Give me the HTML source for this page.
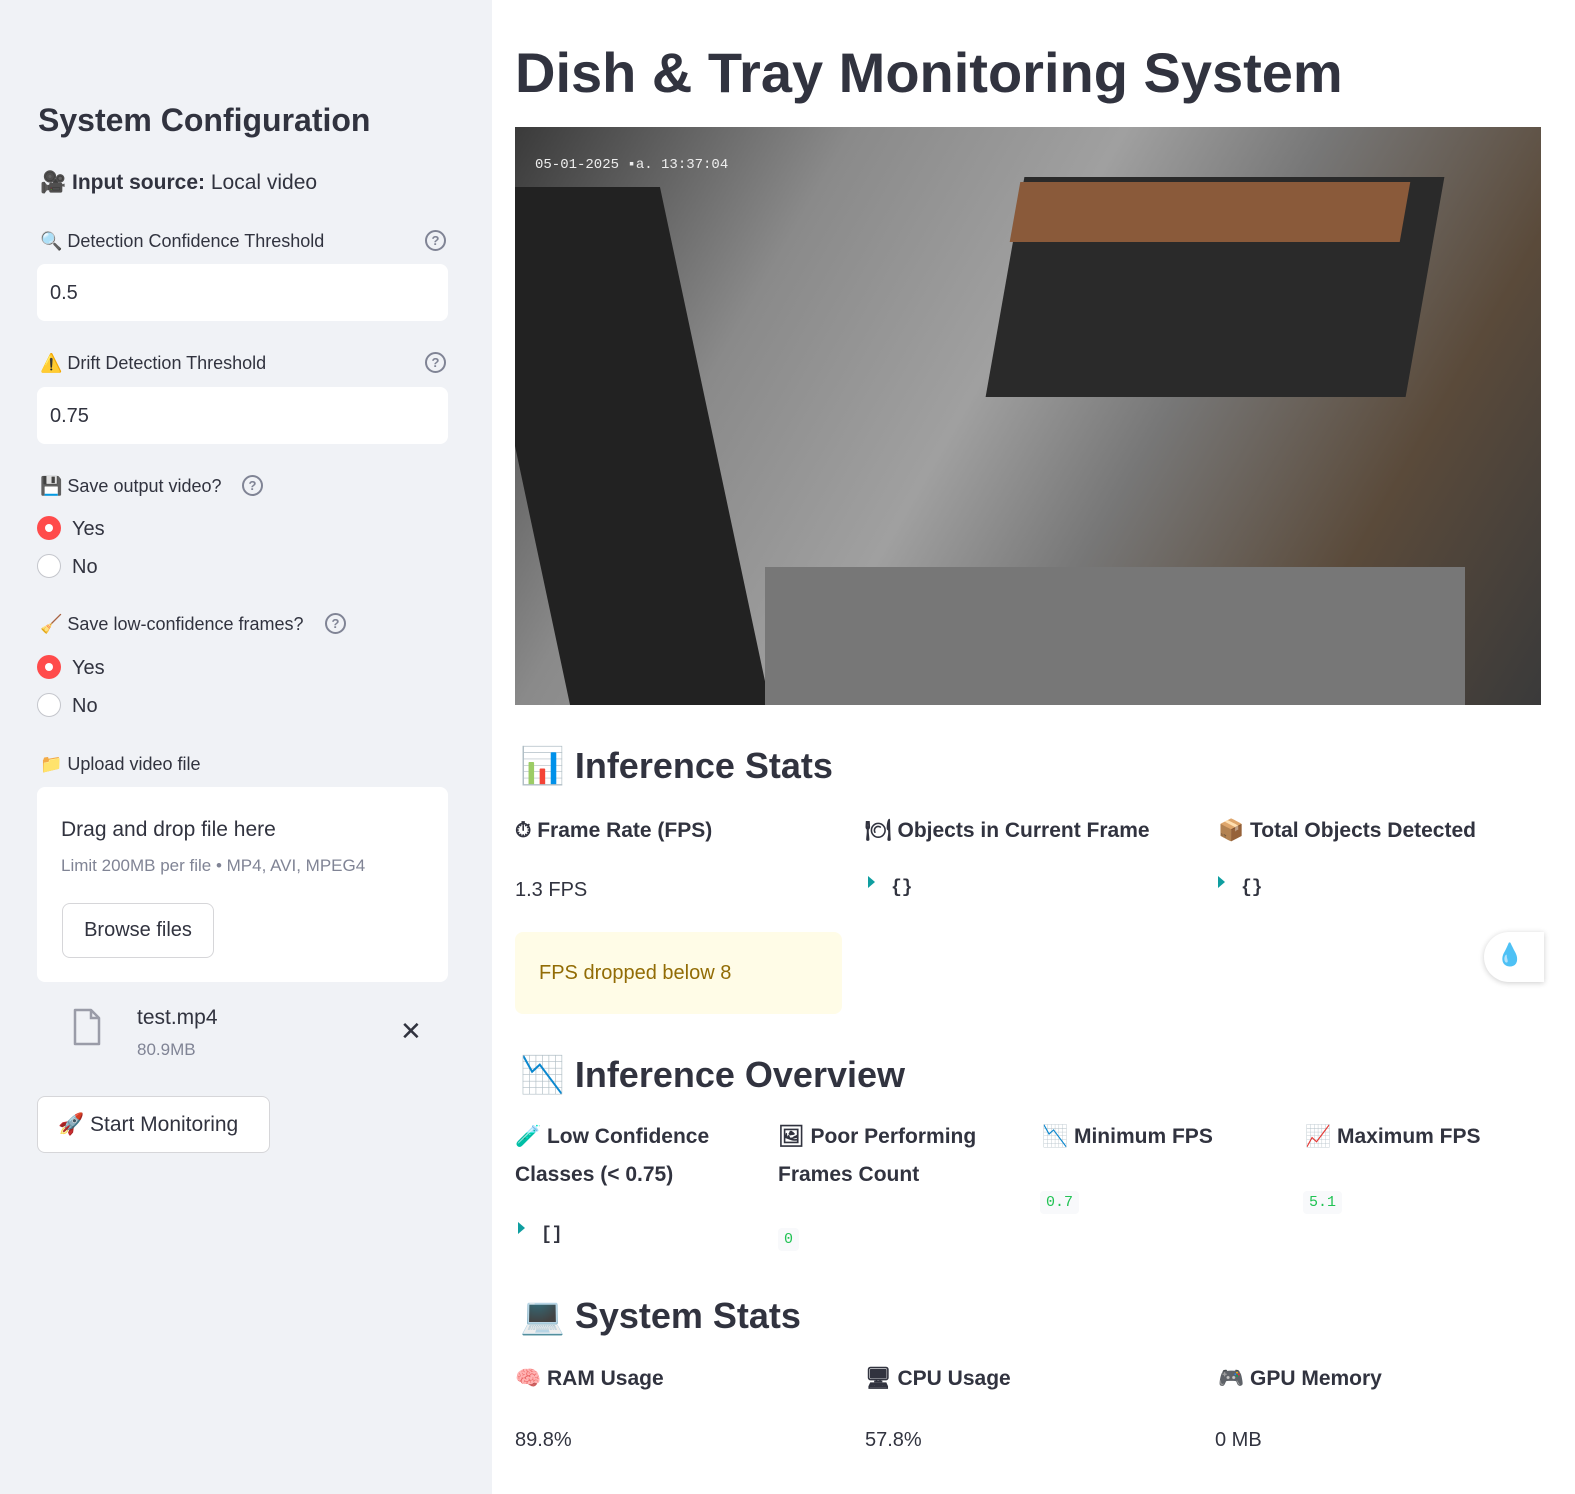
<!DOCTYPE html>
<html><head><meta charset="utf-8"><style>
*{box-sizing:border-box;margin:0;padding:0}
body{width:1575px;height:1494px;position:relative;background:#fff;font-family:"Liberation Sans","Noto Sans CJK JP",sans-serif;color:#31333f;overflow:hidden}
.a{position:absolute;white-space:nowrap}
#sb{position:absolute;left:0;top:0;width:492px;height:1494px;background:#f0f2f6}
.lbl{font-size:18px;color:#31333f}
.inp{position:absolute;left:37px;width:411px;height:57px;background:#fff;border-radius:8px;font-size:20px;padding:18px 13px}
.q{position:absolute;width:21px;height:21px;border:2px solid #808495;border-radius:50%;font-size:13px;font-weight:bold;color:#808495;text-align:center;line-height:17px}
.rad{position:absolute;width:24px;height:24px;border-radius:50%}
.on{background:#ff4b4b}.on::after{content:"";position:absolute;left:8px;top:8px;width:8px;height:8px;border-radius:50%;background:#fff}
.off{border:1.5px solid #c4c6cc;background:#fff}
.rt{font-size:20px}
.h2{font-size:36px;font-weight:bold}
.mh{font-size:21px;font-weight:bold;line-height:38px}
.mv{font-size:20px}
.code{font-family:"Liberation Mono",monospace;font-size:15px;color:#21c354;background:#f8f9fb;padding:3px 6px;border-radius:4px}
.tri{width:0;height:0;border-left:7px solid #0f9ea0;border-top:6px solid transparent;border-bottom:6px solid transparent}
.br{font-family:"Liberation Mono",monospace;font-size:18px;font-weight:bold}
</style></head><body>
<div id="sb"></div>
<div class="a" style="left:38px;top:102px;font-size:32px;font-weight:bold">System Configuration</div>
<div class="a" style="left:40px;top:171px;font-size:21px">🎥 <b>Input source:</b> Local video</div>
<div class="a lbl" style="left:40px;top:231px">🔍 Detection Confidence Threshold</div>
<div class="q" style="left:425px;top:230px">?</div>
<div class="inp" style="top:264px">0.5</div>
<div class="a lbl" style="left:40px;top:353px">⚠️ Drift Detection Threshold</div>
<div class="q" style="left:425px;top:352px">?</div>
<div class="inp" style="top:387px">0.75</div>
<div class="a lbl" style="left:40px;top:476px">💾 Save output video?</div>
<div class="q" style="left:242px;top:475px">?</div>
<div class="rad on" style="left:37px;top:516px"></div><div class="a rt" style="left:72px;top:518px">Yes</div>
<div class="rad off" style="left:37px;top:554px"></div><div class="a rt" style="left:72px;top:556px">No</div>
<div class="a lbl" style="left:40px;top:614px">🧹 Save low-confidence frames?</div>
<div class="q" style="left:325px;top:613px">?</div>
<div class="rad on" style="left:37px;top:655px"></div><div class="a rt" style="left:72px;top:657px">Yes</div>
<div class="rad off" style="left:37px;top:693px"></div><div class="a rt" style="left:72px;top:695px">No</div>
<div class="a lbl" style="left:40px;top:754px">📁 Upload video file</div>
<div class="a" style="left:37px;top:787px;width:411px;height:195px;background:#fff;border-radius:8px"></div>
<div class="a" style="left:61px;top:818px;font-size:21px">Drag and drop file here</div>
<div class="a" style="left:61px;top:856px;font-size:17px;color:#808495">Limit 200MB per file • MP4, AVI, MPEG4</div>
<div class="a" style="left:62px;top:903px;width:152px;height:55px;border:1px solid #d6d6d9;border-radius:8px;background:#fff;font-size:20px;text-align:center;line-height:53px">Browse files</div>
<svg class="a" style="left:72px;top:1008px" width="30" height="38" viewBox="0 0 30 38"><path d="M3 2h16l8 8v26H3z" fill="none" stroke="#9a9ca8" stroke-width="2.5" stroke-linejoin="round"/><path d="M19 2v8h8" fill="none" stroke="#9a9ca8" stroke-width="2.5"/></svg>
<div class="a" style="left:137px;top:1006px;font-size:21px">test.mp4</div>
<div class="a" style="left:137px;top:1040px;font-size:17px;color:#808495">80.9MB</div>
<div class="a" style="left:400px;top:1016px;font-size:26px;color:#31333f">✕</div>
<div class="a" style="left:37px;top:1096px;width:233px;height:57px;border:1px solid #d6d6d9;border-radius:8px;background:#fff;font-size:21px;padding:16px 20px">🚀 Start Monitoring</div>

<div class="a" style="left:515px;top:40px;font-size:56px;font-weight:bold">Dish &amp; Tray Monitoring System</div>
<div class="a" style="left:515px;top:127px;width:1026px;height:578px;background:linear-gradient(120deg,#3a3a3a 0%,#8a8a8a 25%,#a0a0a0 45%,#777 60%,#5a4a3a 80%,#3a3a3a 100%);overflow:hidden">
<div class="a" style="left:490px;top:50px;width:420px;height:220px;background:#2a2a2a;transform:skewX(-10deg)"></div>
<div class="a" style="left:500px;top:55px;width:390px;height:60px;background:#8a5a3a;transform:skewX(-10deg)"></div>
<div class="a" style="left:0;top:60px;width:200px;height:518px;background:#222;transform:skewX(12deg)"></div>
<div class="a" style="left:250px;top:440px;width:700px;height:138px;background:#777"></div>
<div class="a" style="left:20px;top:30px;font-family:'Liberation Mono',monospace;font-size:14px;color:#eee">05-01-2025 ▪a. 13:37:04</div>
</div>
<div class="a h2" style="left:520px;top:745px">📊 Inference Stats</div>
<div class="a mh" style="left:515px;top:812px">⏱ Frame Rate (FPS)</div>
<div class="a mh" style="left:865px;top:812px">🍽 Objects in Current Frame</div>
<div class="a mh" style="left:1218px;top:812px">📦 Total Objects Detected</div>
<div class="a mv" style="left:515px;top:879px">1.3 FPS</div>
<div class="a tri" style="left:868px;top:876px"></div><div class="a br" style="left:891px;top:878px">{}</div>
<div class="a tri" style="left:1218px;top:876px"></div><div class="a br" style="left:1241px;top:878px">{}</div>
<div class="a" style="left:515px;top:932px;width:327px;height:82px;background:#fffce7;border-radius:8px;color:#926c05;font-size:20px;padding:30px 24px">FPS dropped below 8</div>
<div class="a" style="left:1484px;top:932px;width:60px;height:50px;background:#fff;border-radius:25px 0 0 25px;box-shadow:0 1px 6px rgba(0,0,0,.2);font-size:22px;padding:10px 12px;color:#3a8ee6">💧</div>
<div class="a h2" style="left:520px;top:1054px">📉 Inference Overview</div>
<div class="a mh" style="left:515px;top:1118px">🧪 Low Confidence<br>Classes (&lt; 0.75)</div>
<div class="a mh" style="left:778px;top:1118px">🖼 Poor Performing<br>Frames Count</div>
<div class="a mh" style="left:1042px;top:1118px">📉 Minimum FPS</div>
<div class="a mh" style="left:1305px;top:1118px">📈 Maximum FPS</div>
<div class="a tri" style="left:518px;top:1222px"></div><div class="a br" style="left:541px;top:1225px">[]</div>
<div class="a code" style="left:778px;top:1228px">0</div>
<div class="a code" style="left:1040px;top:1191px">0.7</div>
<div class="a code" style="left:1303px;top:1191px">5.1</div>
<div class="a h2" style="left:520px;top:1295px">💻 System Stats</div>
<div class="a mh" style="left:515px;top:1360px">🧠 RAM Usage</div>
<div class="a mh" style="left:865px;top:1360px">🖥 CPU Usage</div>
<div class="a mh" style="left:1218px;top:1360px">🎮 GPU Memory</div>
<div class="a mv" style="left:515px;top:1429px">89.8%</div>
<div class="a mv" style="left:865px;top:1429px">57.8%</div>
<div class="a mv" style="left:1215px;top:1429px">0 MB</div>
</body></html>
